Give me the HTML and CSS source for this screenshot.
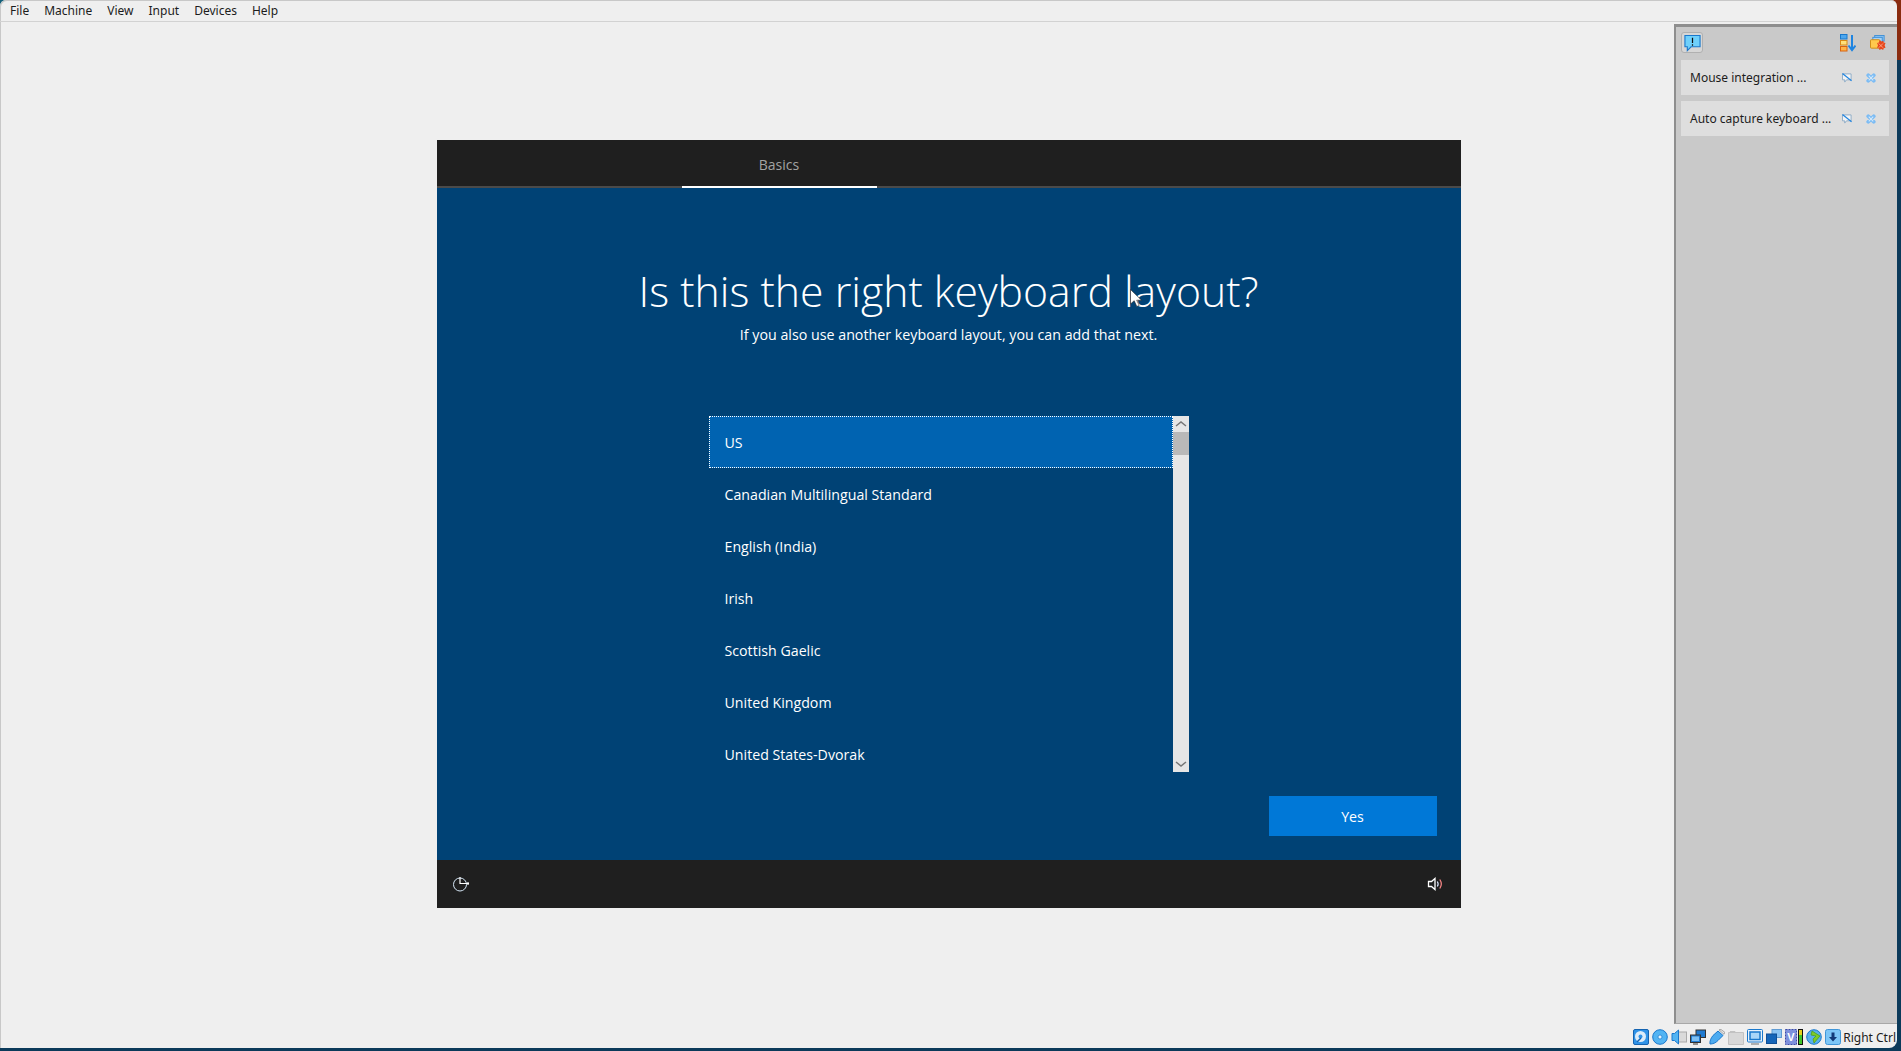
FILE: index.html
```html
<!DOCTYPE html>
<html lang="en">
<head>
  <meta charset="UTF-8">
  <title>Windows 10 setup - VirtualBox</title>
  <link rel="stylesheet" href="styles.css">
</head>
<body>
  <div class="window">
    <!-- menu bar -->
    <nav class="menubar">
      <span>File</span>
      <span>Machine</span>
      <span>View</span>
      <span>Input</span>
      <span>Devices</span>
      <span>Help</span>
    </nav>

    <!-- guest screen -->
    <main class="viewport">
      <div class="guest">
        <header class="guest-top">
          <div class="tab">Basics</div>
        </header>
        <section class="oobe">
          <h1>Is this the right keyboard layout?</h1>
          <p class="sub">If you also use another keyboard layout, you can add that next.</p>
          <div class="picker">
            <ul class="options">
              <li class="selected">US</li>
              <li>Canadian Multilingual Standard</li>
              <li>English (India)</li>
              <li>Irish</li>
              <li>Scottish Gaelic</li>
              <li>United Kingdom</li>
              <li>United States-Dvorak</li>
            </ul>
            <div class="scrollbar">
              <svg class="arrow" viewBox="0 0 16 16"><path d="M3 10l5-4 5 4" fill="none" stroke="#777" stroke-width="1.5"/></svg>
              <div class="thumb"></div>
              <div class="track"></div>
              <svg class="arrow" viewBox="0 0 16 16"><path d="M3 6l5 4 5-4" fill="none" stroke="#777" stroke-width="1.5"/></svg>
            </div>
          </div>
          <div class="actions"><button class="yes">Yes</button></div>
        </section>
        <footer class="guest-bottom">
          <svg class="access" viewBox="0 0 18 16"><circle cx="8" cy="8.500" r="6.500" fill="none" stroke="#d5e6f5" stroke-width="1"/><path d="M8 1v7M8 7.500h9M16 6v3" fill="none" stroke="#fff" stroke-width="1.200"/></svg>
          <svg class="volume" viewBox="0 0 16 14"><path d="M1.500 4.500h3L8 1.500v11L4.500 9.500h-3z" fill="none" stroke="#fff" stroke-width="1.300"/><path d="M10.300 4.500c1 1.500 1 3.500 0 5" fill="none" stroke="#dfe6ff" stroke-width="1.200"/><path d="M12.800 2.500c1.800 2.700 1.800 6.300 0 9" fill="none" stroke="#ff8a8a" stroke-width="1.200"/></svg>
        </footer>
      </div>
    </main>

    <!-- status bar -->
    <div class="statusbar">
      <svg viewBox="0 0 16 16"><rect x=".5" y=".5" width="15" height="15" rx="1.500" fill="#2f93e8" stroke="#1463b0"/><circle cx="7.500" cy="7.500" r="5.500" fill="#dcecf9"/><circle cx="7.500" cy="7.500" r="2" fill="#2f93e8"/><path d="M4 13l4-4" stroke="#1463b0" stroke-width="1.500"/></svg>
      <svg viewBox="0 0 16 16"><circle cx="8" cy="8" r="7.300" fill="#52b4f3" stroke="#1a78cc"/><circle cx="8" cy="8" r="2" fill="#e3f4ff" stroke="#1a78cc" stroke-width=".7"/></svg>
      <svg viewBox="0 0 16 16"><rect x="7" y="3" width="8.500" height="10" fill="#dadada" stroke="#aaa"/><path d="M1 4.500h2.500L7.500 1v14l-4-3.500H1z" fill="#52b4f3" stroke="#1a78cc"/></svg>
      <svg viewBox="0 0 16 16"><rect x="6" y="1" width="9.500" height="7.500" fill="#1f7ad0" stroke="#333"/><rect x=".5" y="6" width="10" height="7.500" fill="#1f7ad0" stroke="#333"/><rect x="2" y="7.500" width="7" height="4.500" fill="#7cc0f4"/><path d="M3 15h5" stroke="#333"/></svg>
      <svg viewBox="0 0 16 16"><path d="M1 15c-.5-3 1-6 3-8.500L9 2l5 4.500-5 5c-2.500 2.500-5 3.500-8 3.500z" fill="#4cabf0" stroke="#1a78cc"/><path d="M10 .8l5 4.500 .8-2L12 .5z" fill="#e8e8e8" stroke="#888" stroke-width=".7"/></svg>
      <svg viewBox="0 0 16 16"><path d="M.5 3.500h15v12H.5z" fill="#d8d8d8" stroke="#c2c2c2"/><path d="M2 2.500h5l1 1" fill="none" stroke="#c2c2c2"/></svg>
      <svg viewBox="0 0 16 16"><rect x=".5" y=".5" width="15" height="12.500" rx="1" fill="#e8f2fb" stroke="#1a78cc"/><rect x="3" y="3" width="10" height="7.500" fill="#a9d6f8" stroke="#1a78cc" stroke-width="1.500"/><path d="M4 15h8" stroke="#999" stroke-width="1.500"/></svg>
      <svg viewBox="0 0 16 16"><rect x="6" y=".5" width="9.500" height="8" fill="#8cc4f2" stroke="#5f9bd3"/><rect x=".5" y="5" width="10" height="9.500" fill="#1565b8" stroke="#0f4f96"/></svg>
      <svg class="wide" viewBox="0 0 19 16"><rect x=".5" y=".5" width="11" height="15" fill="#7d8fdc" stroke="#3a4aa8" stroke-dasharray="2 1"/><text x="2.300" y="12" class="vt">V</text><rect x="13" y="0" width="5" height="16" fill="#111"/><rect x="14" y="1" width="3" height="5" fill="#e8d21c"/><rect x="14" y="6" width="3" height="9" fill="#3fc62a"/></svg>
      <svg viewBox="0 0 16 16"><circle cx="8" cy="8" r="7.300" fill="#58b0ec" stroke="#1a78cc"/><path d="M6 2l8 5-6 7-1-4 3-3-5-1z" fill="#7ccb2a" stroke="#4c9a12" stroke-width=".7"/></svg>
      <svg viewBox="0 0 16 16"><rect x=".5" y=".5" width="15" height="15" rx="2" fill="#7cc6f7" stroke="#3f95d8"/><path d="M6.500 3.500h3V8H12l-4 4.500L4 8h2.500z" fill="#123a78"/></svg>
      <span class="hostkey">Right Ctrl</span>
    </div>

    <!-- notification center, lies over the guest area -->
    <aside class="notices">
      <div class="notices-top">
        <span class="bell">
          <svg viewBox="0 0 18 18"><path d="M1 1h16v12H7.500L3.500 17v-4H1z" fill="#6fd0fb" stroke="#1a78cc" stroke-width="1.200"/><path d="M9 3.500v5.500M9 10.300v1.500" stroke="#111" stroke-width="1.300"/></svg>
        </span>
        <span class="spacer"></span>
        <svg class="top-icon" viewBox="0 0 16 18"><rect x=".5" y=".5" width="6.500" height="4.500" fill="#4ba6ee" stroke="#1a78cc"/><rect x=".5" y="6.500" width="6.500" height="4.500" fill="#ffe07a" stroke="#d98a16"/><rect x=".5" y="12.500" width="6.500" height="4.500" fill="#ffb347" stroke="#d9630f"/><path d="M12 1v14M8.500 11.500L12 16l3.500-4.500" fill="none" stroke="#1f84e0" stroke-width="2"/></svg>
        <svg class="top-icon" viewBox="0 0 17 18"><rect x="5" y="1" width="10" height="6" fill="#8cc4f2" stroke="#3f8fd6"/><rect x="3" y="3" width="10" height="6" fill="#a6d2f5" stroke="#3f8fd6"/><rect x=".5" y="5.500" width="10" height="9" rx="1" fill="#ffc94d" stroke="#cf8a12"/><path d="M10.500 6l1.500 1.500L14 6.500l.5 2 2 .5-1 2.500 1 2.500-2 .5-.5 2-2-1-2 1-.5-2-2-.5 1-2.500-1-2.500 2-.5.500-2z" fill="#e8481c"/><path d="M9.300 9.500l4.500 4.500M13.800 9.500l-4.500 4.500" stroke="#ffb9a0" stroke-width=".8"/></svg>
      </div>
      <div class="notice">
        <span class="notice-text">Mouse integration ...</span>
        <svg class="mini" viewBox="0 0 11 11"><path d="M.5 1h9.500v6.500H5L3 10V7.500H.5z" fill="#f4f4f4" stroke="#8aa9c6"/><path d="M.5 .5l10 8" stroke="#1f84e0" stroke-width="1.300"/></svg>
        <svg class="mini" viewBox="0 0 11 11"><path d="M2.500 2.500l6 6M8.500 2.500l-6 6" stroke="#7cbcf4" stroke-width="4.200" stroke-linecap="round"/><path d="M3 3l5 5M8 3l-5 5" stroke="#d3e9fb" stroke-width="1.200"/></svg>
      </div>
      <div class="notice">
        <span class="notice-text">Auto capture keyboard ...</span>
        <svg class="mini" viewBox="0 0 11 11"><path d="M.5 1h9.500v6.500H5L3 10V7.500H.5z" fill="#f4f4f4" stroke="#8aa9c6"/><path d="M.5 .5l10 8" stroke="#1f84e0" stroke-width="1.300"/></svg>
        <svg class="mini" viewBox="0 0 11 11"><path d="M2.500 2.500l6 6M8.500 2.500l-6 6" stroke="#7cbcf4" stroke-width="4.200" stroke-linecap="round"/><path d="M3 3l5 5M8 3l-5 5" stroke="#d3e9fb" stroke-width="1.200"/></svg>
      </div>
    </aside>

    <!-- mouse pointer -->
    <svg class="pointer" viewBox="0 0 12 18"><path d="M.5 .5v14.500l3.700-3.300L6.800 17.500l2.400-1.100-2.500-5.200H11.500z" fill="#fff" stroke="#222" stroke-width=".6"/></svg>
  </div>
</body>
</html>
```

FILE: styles.css
```css
html, body {
  margin: 0;
  height: 100%;
  overflow: hidden;
}
body {
  background: linear-gradient(90deg, #14607a 0 50%, #8a2c10 50%) top / 100% 60px no-repeat, #0b3a5a;
}
.window {
  position: relative;
  width: 1897px;
  height: 1048px;
  display: flex;
  flex-direction: column;
  background: #efefef;
  border-radius: 6px 6px 8px 0;
  overflow: hidden;
  font-family: "Noto Sans", sans-serif;
  color: #1c1c1c;
  box-shadow: inset 1px 1px 0 #c8c8c8;
}
.menubar {
  height: 21px;
  flex: none;
  display: flex;
  align-items: center;
  gap: 15px;
  padding-left: 10px;
  border-bottom: 1px solid #d2d2d2;
  font-size: 12px;
}
.viewport {
  flex: 1;
  display: flex;
  justify-content: center;
  align-items: center;
}
.guest {
  width: 1024px;
  height: 768px;
  display: flex;
  flex-direction: column;
  font-family: "Open Sans", sans-serif;
  color: #fff;
}
.guest-top {
  height: 46px;
  flex: none;
  padding-left: 245px;
  background: #1f1f1f;
  border-bottom: 2px solid #4a4a4a;
}
.tab {
  width: 195px;
  height: 43px;
  padding-top: 3px;
  margin-bottom: -2px;
  border-bottom: 2px solid #fff;
  display: flex;
  justify-content: center;
  align-items: center;
  font-size: 14px;
  color: #a3a3a3;
}
.oobe {
  flex: 1;
  display: flex;
  flex-direction: column;
  align-items: center;
  background: #004275;
}
.oobe h1 {
  margin: 73px 0 0;
  font-size: 42.750px;
  font-weight: 300;
  line-height: 60px;
}
.sub {
  margin: 4px 0 0;
  font-size: 14.250px;
  line-height: 20px;
}
.picker {
  margin-top: 71px;
  width: 480px;
  height: 356px;
  display: flex;
}
.options {
  flex: 1;
  margin: 0;
  padding: 0;
  list-style: none;
  overflow: hidden;
  font-size: 14.200px;
}
.options li {
  height: 52px;
  box-sizing: border-box;
  padding: 2px 0 0 16px;
  display: flex;
  align-items: center;
}
.options .selected {
  background: #0063b1;
  border: 1px dotted #fff;
  padding-left: 15px;
}
.scrollbar {
  width: 16px;
  display: flex;
  flex-direction: column;
  background: #e6e6e6;
}
.arrow {
  width: 16px;
  height: 16px;
  flex: none;
}
.thumb {
  height: 23px;
  background: #b9b9b9;
}
.track {
  flex: 1;
}
.actions {
  align-self: stretch;
  display: flex;
  justify-content: flex-end;
  margin-top: 24px;
  padding-right: 24px;
}
.yes {
  width: 168px;
  height: 40px;
  padding-top: 2px;
  border: none;
  background: #0078d7;
  color: #fff;
  font-family: "Open Sans", sans-serif;
  font-size: 14.200px;
}
.guest-bottom {
  height: 48px;
  flex: none;
  display: flex;
  justify-content: space-between;
  align-items: center;
  padding: 0 18px 0 15px;
  background: #1f1f1f;
}
.access {
  width: 18px;
  height: 16px;
}
.volume {
  width: 16px;
  height: 14px;
}
.statusbar {
  height: 23px;
  flex: none;
  display: flex;
  justify-content: flex-end;
  align-items: center;
  gap: 3px;
  padding-right: 1px;
  overflow: hidden;
}
.statusbar svg {
  width: 16px;
  height: 16px;
  flex: none;
}
.statusbar .wide {
  width: 19px;
  margin-right: -1px;
}
.vt {
  font-family: "Liberation Sans", sans-serif;
  font-size: 11px;
  font-weight: bold;
  fill: #fff;
}
.hostkey {
  font-size: 12px;
  white-space: nowrap;
  margin: 1px 0 0 -1px;
}
.notices {
  position: absolute;
  top: 24px;
  right: 0;
  bottom: 24px;
  width: 223px;
  box-sizing: border-box;
  padding: 5px 8px 0 5px;
  background: #c9c9c9;
  border-top: 3px solid #8e8e8e;
  border-left: 2px solid #8e8e8e;
  border-bottom: 1px solid #a8a8a8;
}
.notices-top {
  height: 21px;
  display: flex;
  align-items: center;
  margin-bottom: 7px;
  padding-right: 3px;
}
.bell {
  width: 22px;
  height: 21px;
  box-sizing: border-box;
  display: flex;
  justify-content: center;
  align-items: center;
  border: 1px solid #b0b0b0;
  border-radius: 3px;
  background: #d6d6d6;
}
.bell svg {
  width: 17px;
  height: 18px;
}
.spacer {
  flex: 1;
}
.top-icon {
  width: 16px;
  height: 18px;
  margin-left: 14px;
}
.notice {
  height: 35px;
  display: flex;
  align-items: center;
  margin-bottom: 6px;
  padding: 0 13px 0 9px;
  background: #dedede;
  font-size: 12px;
}
.notice-text {
  flex: 1;
  min-width: 0;
  white-space: nowrap;
}
.mini {
  width: 10px;
  height: 10px;
  margin-left: 14px;
  flex: none;
}
.pointer {
  position: absolute;
  left: 1130px;
  top: 289px;
  width: 12px;
  height: 18px;
}
```
